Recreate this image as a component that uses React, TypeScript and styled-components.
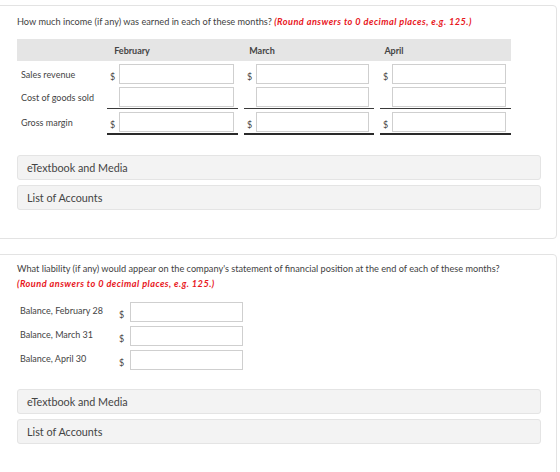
import styled, { createGlobalStyle } from 'styled-components'

const GlobalStyle = createGlobalStyle`
  html, body {
    margin: 0;
    padding: 0;
    background: #ffffff;
  }
  body {
    font-family: Lato, "Open Sans", "Liberation Sans", sans-serif;
    color: #3f3f3f;
  }
`

const Page = styled.div`
  width: 560px;
  padding-top: 5px;
`

const Panel = styled.section<{ $top: number; $bottom: number }>`
  margin: 0 3px 15px -4px;
  padding: ${({ $top }) => $top}px 0 ${({ $bottom }) => $bottom}px 20px;
  border: 1px solid #e3e3e3;
  border-radius: 0 4px 4px 0;
  background: #fff;
`

const Question = styled.p`
  margin: 0;
  font-size: 9.2px;
  line-height: 15px;
  color: #3f3f3f;
`

const Hint = styled.span`
  color: #e8161c;
  font-weight: 700;
  font-style: italic;
  letter-spacing: 0.45px;
`

const Sheet = styled.div`
  margin-top: 10px;
  width: 494px;
`

const HeadRow = styled.div`
  display: grid;
  grid-template-columns: 50px 130px 130px 134px 1fr;
  height: 22px;
  align-items: center;
  background: #e5e5e5;
`

const HeadCell = styled.div`
  font-size: 9px;
  font-weight: 700;
  color: #444;
  text-align: center;
`

const Row = styled.div`
  display: grid;
  grid-template-columns: 84px 131px 130px 131px;
  column-gap: 6px;
  align-items: start;
  margin-top: 3px;
`

const Label = styled.div`
  padding-left: 4px;
  height: 20px;
  display: flex;
  align-items: center;
  font-size: 9px;
  color: #444;
`

const Cell = styled.div<{ $rule?: 'single' | 'double' }>`
  display: flex;
  align-items: center;
  padding-bottom: ${({ $rule }) => ($rule ? '1px' : '0')};
  border-bottom: ${({ $rule }) =>
    $rule === 'single' ? '1px solid #3a3a3a' : $rule === 'double' ? '2px solid #2a2a2a' : 'none'};
`

const Dollar = styled.span`
  width: 12px;
  padding-left: 3px;
  box-sizing: border-box;
  padding-top: 4px;
  font-size: 9px;
  color: #444;
`

const Field = styled.input<{ $width: number }>`
  width: ${({ $width }) => $width}px;
  height: 20px;
  box-sizing: border-box;
  margin: 0;
  padding: 0 4px;
  border: 1px solid #cfcfcf;
  border-radius: 0;
  background: #fff;
  font: inherit;
  outline: none;
`

const Links = styled.div<{ $top: number }>`
  display: flex;
  flex-direction: column;
  gap: 5px;
  margin-top: ${({ $top }) => $top}px;
  width: 524px;
`

const LinkBox = styled.div`
  height: 25px;
  box-sizing: border-box;
  display: flex;
  align-items: center;
  padding-left: 9px;
  border: 1px solid #e4e4e4;
  border-radius: 3px;
  background: #f3f3f3;
  font-size: 10.8px;
  color: #444;
`

const BalanceList = styled.div`
  margin-top: 11px;
  display: flex;
  flex-direction: column;
  gap: 4px;
`

const BalanceRow = styled.div`
  display: grid;
  grid-template-columns: 102px 11px 113px;
  align-items: center;
  height: 20px;
`

const BalanceLabel = styled.div`
  padding-left: 3px;
  font-size: 9px;
  color: #444;
  margin-top: -3px;
`

const BalanceDollar = styled.span`
  font-size: 9px;
  color: #444;
  padding-top: 5px;
`

const months = ['February', 'March', 'April']
const widths = [115, 113, 114]

const income = [
  { label: 'Sales revenue', dollar: true, rule: undefined },
  { label: 'Cost of goods sold', dollar: false, rule: 'single' as const },
  { label: 'Gross margin', dollar: true, rule: 'double' as const },
]

const balances = ['Balance, February 28', 'Balance, March 31', 'Balance, April 30']

function Resources({ top }: { top: number }) {
  return (
    <Links $top={top}>
      <LinkBox>eTextbook and Media</LinkBox>
      <LinkBox>List of Accounts</LinkBox>
    </Links>
  )
}

export default function App() {
  return (
    <Page>
      <GlobalStyle />
      <Panel $top={8} $bottom={28}>
        <Question>
          How much income (if any) was earned in each of these months?{' '}
          <Hint>(Round answers to 0 decimal places, e.g. 125.)</Hint>
        </Question>
        <Sheet>
          <HeadRow>
            <span />
            {months.map((m) => (
              <HeadCell key={m}>{m}</HeadCell>
            ))}
          </HeadRow>
          {income.map((row) => (
            <Row key={row.label}>
              <Label>{row.label}</Label>
              {months.map((m, i) => (
                <Cell key={m} $rule={row.rule}>
                  <Dollar>{row.dollar ? '$' : ''}</Dollar>
                  <Field $width={widths[i]} />
                </Cell>
              ))}
            </Row>
          ))}
        </Sheet>
        <Resources top={20} />
      </Panel>
      <Panel $top={6} $bottom={40}>
        <Question>
          What liability (if any) would appear on the company's statement of financial position at the end of each of these months?
          <br />
          <Hint>(Round answers to 0 decimal places, e.g. 125.)</Hint>
        </Question>
        <BalanceList>
          {balances.map((b) => (
            <BalanceRow key={b}>
              <BalanceLabel>{b}</BalanceLabel>
              <BalanceDollar>$</BalanceDollar>
              <Field $width={113} />
            </BalanceRow>
          ))}
        </BalanceList>
        <Resources top={19} />
      </Panel>
    </Page>
  )
}
